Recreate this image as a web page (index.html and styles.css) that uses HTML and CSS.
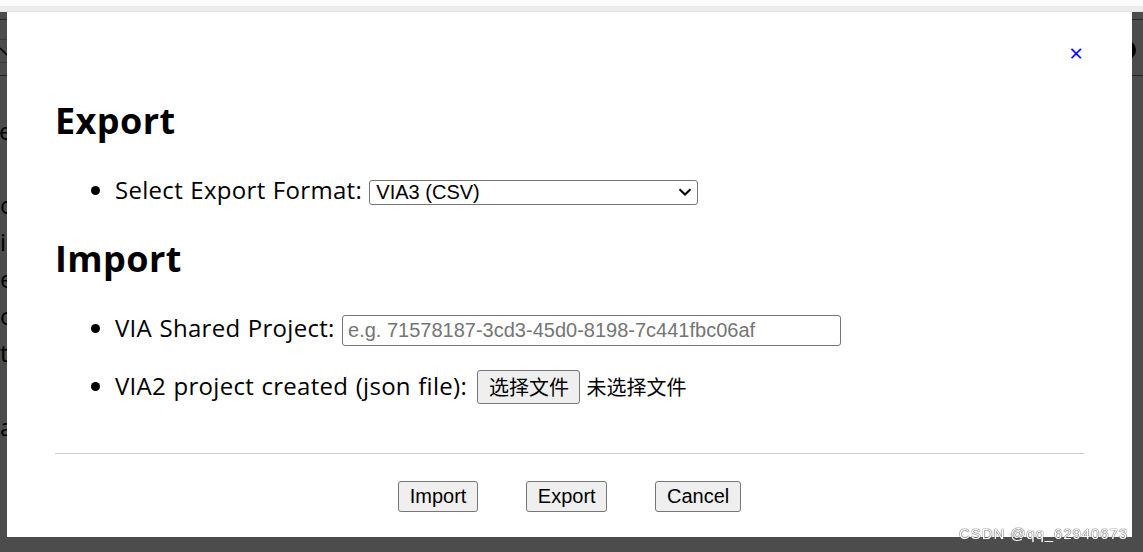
FILE: index.html
```html
<!DOCTYPE html>
<html lang="en">
<head>
<meta charset="utf-8">
<title>Import / Export</title>
<link rel="stylesheet" href="styles.css">
</head>
<body>
<div class="topband"></div>
<div class="page">
  <div class="pg-header">
    <div class="pg-select">
      <svg class="pg-chev" width="16" height="10" viewBox="0 0 16 10"><path d="M1 1 L8 8 L15 1" fill="none" stroke="#000" stroke-width="1.5"/></svg>
    </div>
    <div class="pg-avatar"></div>
  </div>
  <p class="pg-text">ew<br>&nbsp;<br>on<br>in<br>ex<br>or<br>to<br>&nbsp;<br>an</p>
</div>

<div class="overlay">
  <div class="modal">
    <div class="close-row"><a class="close" href="#">×</a></div>
    <h1 class="title">Export</h1>
    <ul class="opts">
      <li>Select Export Format: <span class="select-wrap"><select class="select"><option>VIA3 (CSV)</option></select><svg class="chev" width="14" height="8" viewBox="0 0 14 8"><path d="M1.5 1.2 L7 6.5 L12.5 1.2" fill="none" stroke="#000" stroke-width="2"/></svg></span></li>
    </ul>
    <h1 class="title title-import">Import</h1>
    <ul class="opts">
      <li>VIA Shared Project: <input class="text-input" type="text" placeholder="e.g. 71578187-3cd3-45d0-8198-7c441fbc06af"></li>
      <li>VIA2 project created (json file): <button class="file-btn" type="button">选择文件</button><span class="file-none">未选择文件</span></li>
    </ul>
    <hr class="sep">
    <div class="actions">
      <button class="btn" type="button">Import</button>
      <button class="btn" type="button">Export</button>
      <button class="btn" type="button">Cancel</button>
    </div>
  </div>
</div>
<div class="watermark">CSDN @qq_62940673</div>
</body>
</html>
```
FILE: styles.css
```css
* { box-sizing: border-box; }
html, body { margin: 0; height: 100%; }
body {
  background: #fff;
  font-family: "Open Sans", "Noto Sans", sans-serif;
  overflow: hidden;
  color: #000;
}

/* top browser-ish strip */
.topband {
  height: 12px;
  background: linear-gradient(#fbfbfb 0 6px, #ececec 6px 11px, #e2e2e2 11px);
}

/* page behind the overlay */
.page { height: 540px; }
.pg-header {
  margin-top: 7px;
  height: 57px;
  border-top: 1px solid #8a8a8a;
  border-bottom: 1px solid #7a7a7a;
  display: flex;
  justify-content: space-between;
  align-items: flex-start;
}
.pg-select {
  margin-top: 19px;
  width: 120px;
  height: 24px;
  border-top: 1px solid #bbb;
  border-bottom: 1px solid #bbb;
  display: flex;
  align-items: center;
}
.pg-chev { margin-left: -1px; margin-top: 2px; }
.pg-avatar {
  margin-top: 20px;
  margin-right: 7px;
  width: 20px;
  height: 20px;
  border-radius: 50%;
  background: #000;
}
.pg-text {
  margin: 0;
  padding-top: 36px;
  font-size: 24px;
  line-height: 37px;
  text-indent: -1px;
  color: #000;
}

/* overlay + modal */
.overlay {
  position: fixed;
  top: 12px;
  left: 0;
  right: 0;
  bottom: 0;
  background: rgba(0, 0, 0, 0.7);
}
.modal {
  position: absolute;
  left: 7px;
  top: 0;
  width: 1125px;
  height: 525px;
  background: #fff;
  padding: 24px 48px 25px;
}
.close-row {
  display: flex;
  justify-content: flex-end;
  font-size: 24px;
  line-height: 34px;
}
.close {
  color: #0000ff;
  text-decoration: none;
  margin-right: 1px;
}
.title {
  font-size: 36px;
  line-height: 44px;
  font-weight: 700;
  letter-spacing: 0.4px;
  margin: 29px 0 0;
}
.title-import { margin-top: 30px; }
.opts {
  margin: 30px 0 0;
  padding-left: 60px;
  font-size: 24px;
  line-height: 34px;
  letter-spacing: 0.3px;
  word-spacing: 0.8px;
}
.opts li + li { margin-top: 23px; }

.select-wrap {
  position: relative;
  display: inline-flex;
  vertical-align: baseline;
}
.select {
  appearance: none;
  -webkit-appearance: none;
  width: 329px;
  height: 25px;
  padding: 0 0 0 6px;
  margin: 0;
  font-family: "Liberation Sans", Arial, sans-serif;
  font-size: 20px;
  letter-spacing: normal;
  word-spacing: normal;
  color: #000;
  background: #fff;
  border: 1px solid #767676;
  border-radius: 3px;
}
.chev {
  position: absolute;
  right: 6px;
  top: 8px;
  pointer-events: none;
}
.text-input {
  width: 499px;
  height: 31px;
  padding: 3px 5px;
  margin: 0;
  font-family: "Liberation Sans", Arial, sans-serif;
  font-size: 20px;
  line-height: 23px;
  letter-spacing: normal;
  word-spacing: normal;
  border: 1px solid #767676;
  border-radius: 3px;
  color: #000;
}
.text-input::placeholder { color: #757575; }

.file-btn {
  height: 34px;
  padding: 2px 10.5px;
  margin: 0 0 0 3px;
  font-family: "Noto Sans CJK SC", sans-serif;
  font-size: 20px;
  line-height: 28px;
  letter-spacing: normal;
  color: #000;
  background: #efefef;
  border: 1px solid #767676;
  border-radius: 3px;
}
.file-none {
  margin-left: 6px;
  font-family: "Noto Sans CJK SC", sans-serif;
  font-size: 20px;
  letter-spacing: normal;
}

.sep {
  margin: 49px 0 0;
  border: 0;
  border-top: 1px solid #cccccc;
  height: 0;
}
.actions {
  margin-top: 27px;
  display: flex;
  justify-content: center;
  gap: 48px;
}
.btn {
  height: 31px;
  padding: 3px 10.7px;
  font-family: "Liberation Sans", Arial, sans-serif;
  font-size: 20px;
  line-height: 23px;
  color: #000;
  background: #efefef;
  border: 1px solid #767676;
  border-radius: 3px;
}

.watermark {
  position: fixed;
  right: 15px;
  bottom: 11px;
  font-family: "Liberation Sans", Arial, sans-serif;
  font-size: 15px;
  line-height: 15px;
  letter-spacing: 0.9px;
  color: #fff;
  text-shadow: 0 0 1px #555, 0 0 1px #555, 0 0 1px #777;
}
```
